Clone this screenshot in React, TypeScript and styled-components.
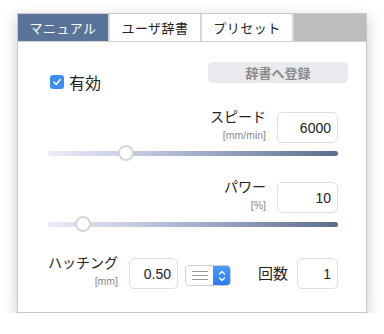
import React from "react";
import styled, { createGlobalStyle } from "styled-components";

const Global = createGlobalStyle`
  html, body { margin: 0; padding: 0; background: #fff; }
  body { font-family: "Liberation Sans", "Noto Sans CJK JP", sans-serif; color: #222; }
`;

const Page = styled.div`
  padding: 13px 0 0 17px;
`;

const Panel = styled.div`
  width: 350px;
  height: 300px;
  box-sizing: border-box;
  border: 1px solid #c9c9c9;
  background: #fff;
  box-shadow: 0 5px 14px rgba(0, 0, 0, 0.22);
  display: flex;
  flex-direction: column;
`;

const TabBar = styled.div`
  display: flex;
  height: 28px;
  box-sizing: border-box;
  gap: 2px;
  background: #d6d6d6;
  border-bottom: 1px solid #cfcfcf;
`;

const Tab = styled.div<{ $active?: boolean }>`
  width: 90px;
  display: flex;
  align-items: center;
  justify-content: center;
  font-size: 13px;
  letter-spacing: 0.5px;
  background: ${(p) => (p.$active ? "#5a7399" : "#fff")};
  color: ${(p) => (p.$active ? "#fff" : "#222")};
`;

const TabFill = styled.div`
  flex: 1;
  background: #bdbdbd;
`;

const Content = styled.div`
  padding: 20px 28px 0 30px;
  display: flex;
  flex-direction: column;
`;

const TopRow = styled.div`
  display: flex;
  justify-content: space-between;
  align-items: flex-start;
`;

const CheckLabel = styled.label`
  display: flex;
  align-items: center;
  gap: 5px;
  margin: 10px 0 0 2px;
  height: 20px;
  font-size: 16px;
`;

const CheckBox = styled.span`
  width: 14px;
  height: 14px;
  border-radius: 3px;
  background: #3d8ef3;
  display: flex;
  align-items: center;
  justify-content: center;
`;

const RegisterButton = styled.div`
  width: 140px;
  height: 21px;
  margin-right: -10px;
  border-radius: 5px;
  background: #e9eaee;
  color: #8b8b8b;
  font-weight: bold;
  font-size: 13px;
  display: flex;
  align-items: center;
  justify-content: center;
`;

const ParamRow = styled.div<{ $mt: number }>`
  display: flex;
  justify-content: flex-end;
  align-items: flex-start;
  margin-top: ${(p) => p.$mt}px;
`;

const LabelBlock = styled.div<{ $w?: number }>`
  display: flex;
  flex-direction: column;
  align-items: flex-end;
  margin-top: -4px;
  ${(p) => (p.$w ? `width: ${p.$w}px;` : "")}
`;

const Title = styled.div`
  font-size: 14px;
  line-height: 18px;
  white-space: nowrap;
`;

const Unit = styled.div`
  font-size: 10.5px;
  line-height: 14px;
  color: #8a8a8a;
  margin-top: 2px;
  white-space: nowrap;
`;

const NumBox = styled.div<{ $w: number; $ml?: number }>`
  width: ${(p) => p.$w}px;
  height: 31px;
  box-sizing: border-box;
  border: 1px solid #dedede;
  border-radius: 5px;
  font-size: 14px;
  display: flex;
  align-items: center;
  justify-content: flex-end;
  padding-right: 6px;
  margin-left: ${(p) => p.$ml ?? 11}px;
  background: #fff;
  flex-shrink: 0;
`;

const SliderWrap = styled.div<{ $mt: number }>`
  position: relative;
  height: 16px;
  margin-top: ${(p) => p.$mt}px;
  display: flex;
  align-items: center;
`;

const Track = styled.div`
  flex: 1;
  height: 5px;
  border-radius: 3px;
  background: linear-gradient(90deg, #ebebfa 0%, #c4cae2 30%, #8f9dbb 65%, #5a6d8e 100%);
`;

const Thumb = styled.div`
  position: absolute;
  top: 0;
  width: 16px;
  height: 16px;
  box-sizing: border-box;
  border-radius: 50%;
  background: #fff;
  border: 2px solid #d6d6d6;
  transform: translateX(-50%);
`;

const BottomRow = styled.div`
  display: flex;
  align-items: flex-start;
  margin-top: 26px;
`;

const SelectBox = styled.div`
  width: 46px;
  height: 21px;
  box-sizing: border-box;
  margin: 7px 0 0 7px;
  border: 1px solid #cfcfcf;
  border-radius: 4px;
  display: flex;
  overflow: hidden;
  flex-shrink: 0;
`;

const SelectFace = styled.div`
  flex: 1;
  display: flex;
  align-items: center;
  justify-content: center;
  background: #fff;
`;

const SelectArrow = styled.div`
  width: 17px;
  background: linear-gradient(#4b9bff, #2a7bf2);
  display: flex;
  align-items: center;
  justify-content: center;
`;

const CountLabel = styled.div`
  margin: 7px 0 0 auto;
  font-size: 15px;
  line-height: 18px;
  white-space: nowrap;
`;

const Slider = ({ pos, mt }: { pos: number; mt: number }) => (
  <SliderWrap $mt={mt}>
    <Track />
    <Thumb style={{ left: `${pos}px` }} />
  </SliderWrap>
);

export default function App() {
  return (
    <>
      <Global />
      <Page>
        <Panel>
          <TabBar>
            <Tab $active>マニュアル</Tab>
            <Tab>ユーザ辞書</Tab>
            <Tab>プリセット</Tab>
            <TabFill />
          </TabBar>
          <Content>
            <TopRow>
              <CheckLabel>
                <CheckBox>
                  <svg width="10" height="10" viewBox="0 0 10 10">
                    <path d="M2 5.2 L4.2 7.4 L8.2 2.6" stroke="#fff" strokeWidth="1.6" fill="none" strokeLinecap="round" strokeLinejoin="round" />
                  </svg>
                </CheckBox>
                有効
              </CheckLabel>
              <RegisterButton>辞書へ登録</RegisterButton>
            </TopRow>

            <ParamRow $mt={20}>
              <LabelBlock>
                <Title>スピード</Title>
                <Unit>[mm/min]</Unit>
              </LabelBlock>
              <NumBox $w={61}>6000</NumBox>
            </ParamRow>
            <Slider pos={78} mt={2} />

            <ParamRow $mt={21}>
              <LabelBlock>
                <Title>パワー</Title>
                <Unit>[%]</Unit>
              </LabelBlock>
              <NumBox $w={61}>10</NumBox>
            </ParamRow>
            <Slider pos={35} mt={3} />

            <BottomRow>
              <LabelBlock $w={70}>
                <Title>ハッチング</Title>
                <Unit>[mm]</Unit>
              </LabelBlock>
              <NumBox $w={49}>0.50</NumBox>
              <SelectBox>
                <SelectFace>
                  <svg width="16" height="11" viewBox="0 0 16 11">
                    <path d="M0 1.5 H16 M0 5.5 H16 M0 9.5 H16" stroke="#9a9a9a" strokeWidth="1" />
                  </svg>
                </SelectFace>
                <SelectArrow>
                  <svg width="8" height="14" viewBox="0 0 8 14">
                    <path d="M1.5 5 L4 2.5 L6.5 5 M1.5 9 L4 11.5 L6.5 9" stroke="#fff" strokeWidth="1.3" fill="none" strokeLinecap="round" strokeLinejoin="round" />
                  </svg>
                </SelectArrow>
              </SelectBox>
              <CountLabel>回数</CountLabel>
              <NumBox $w={41} $ml={9}>1</NumBox>
            </BottomRow>
          </Content>
        </Panel>
      </Page>
    </>
  );
}
